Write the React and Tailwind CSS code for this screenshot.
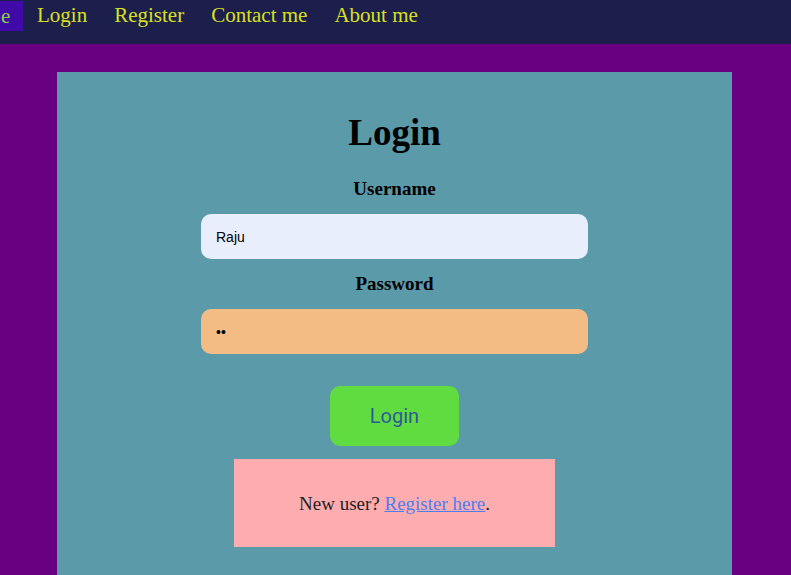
import React, { useState } from "react";

const navItems = ["Login", "Register", "Contact me", "About me"];

const App = () => {
  const [username, setUsername] = useState("Raju");
  const [password, setPassword] = useState("ab");

  return (
    <div className="min-h-[575px] bg-[#690082] font-['Liberation_Serif',serif]">
      <nav className="flex h-[44px] items-start bg-[#1c1e4c]">
        <div className="mt-[1px] flex h-[30px] w-[23px] items-center bg-[#3f0aa8] pl-[1px] text-[21px] leading-none text-[#8bd14a]">
          e
        </div>
        <ul className="ml-[14px] flex h-[31px] items-center gap-[27px]">
          {navItems.map((item) => (
            <li key={item} className="text-[21px] leading-none text-[#d9e021]">
              {item}
            </li>
          ))}
        </ul>
      </nav>

      <main className="pt-[28px] pl-[57px] pr-[59px]">
        <div className="flex min-h-[503px] flex-col items-center bg-[#5b9aa8] pt-[39px]">
          <h1 className="text-[37px] leading-[44px] font-bold text-black">Login</h1>

          <label className="mt-[23px] text-[19px] leading-[22px] font-bold text-black">
            Username
          </label>
          <input
            type="text"
            value={username}
            onChange={(e) => setUsername(e.target.value)}
            className="mt-[14px] h-[45px] w-[387px] rounded-[10px] bg-[#e8eefc] px-[15px] font-['Liberation_Sans',sans-serif] text-[14px] text-black outline-none"
          />

          <label className="mt-[14px] text-[19px] leading-[22px] font-bold text-black">
            Password
          </label>
          <input
            type="password"
            value={password}
            onChange={(e) => setPassword(e.target.value)}
            className="mt-[14px] h-[45px] w-[387px] rounded-[10px] bg-[#f2bc84] px-[15px] font-['Liberation_Sans',sans-serif] text-[14px] text-black outline-none"
          />

          <button className="mt-[32px] h-[60px] w-[129px] rounded-[10px] bg-[#60dc40] font-['Roboto',sans-serif] text-[20px] text-[#2f5a9a]">
            Login
          </button>

          <div className="mt-[13px] flex h-[88px] w-[321px] items-center justify-center bg-[#fdadb0] pt-[2px] text-[19px] text-[#222]">
            <p>
              New user?{" "}
              <a href="#" className="text-[#4d7ef0] underline">
                Register here
              </a>
              .
            </p>
          </div>
        </div>
      </main>
    </div>
  );
};

export default App;
